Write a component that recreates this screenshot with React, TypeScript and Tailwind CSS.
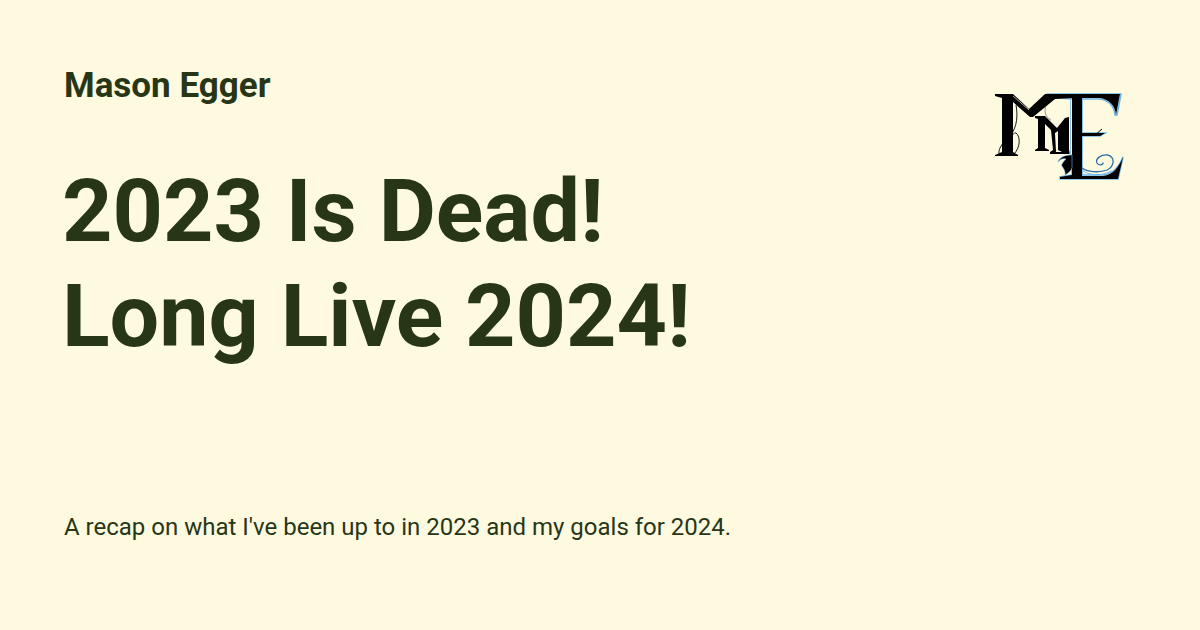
function Logo() {
  return (
    <svg width="130" height="90" viewBox="0 0 130 90" fill="none" className="block">
      {/* pale blue edge round the E */}
      <path
        stroke="#6fb4e8"
        strokeWidth="1.6"
        d="M52 2 L126 2 L122 23 L120 23 C119 13 114 8 104 7 L87 7 L87 41 L110 41 L105 44 L87 44 L87 83 L108 83 C118 82 125 74 128 65 L123 87 L65 87 L65 85 L77 83 L77 7 L52 5 Z"
      />
      {/* big M */}
      <path
        fill="#000"
        d="M0 2 L18 2 L34 17 L50 2 L78 2 L78 6 L60 7 L38 25 L35 25 L18 10 L18 60 L23 63 L23 64 L0 64 L0 63 L7 60 L7 6 L0 4 Z"
      />
      <path stroke="#fefae0" strokeWidth="0.7" d="M18 4 L34 18" />
      {/* small m */}
      <path
        fill="#000"
        d="M40 24 L50 24 L62 36 L70 26 L74 25 L74 58 L76 62 L55 62 L55 60 L58 58 L56 38 L50 32 L50 56 L54 58 L54 59 L40 59 L40 58 L43 56 L43 27 L40 26 Z"
      />
      <path fill="#fefae0" d="M60 41 L63 39 L63 58 L67 60 L61 60 Z" />
      <path fill="#fefae0" d="M74.5 8 L77 8 L77 62 L74.5 62 Z" />
      <path stroke="#6fb4e8" strokeWidth="0.8" d="M75.5 8 L75.5 62" />
      {/* E */}
      <path
        fill="#000"
        d="M68 2 L125 2 L121 23 C120 13 114 7 104 6 L87 6 L87 41 L110 41 L105 44 L87 44 L87 84 L108 84 C118 83 124 75 128 65 L123 87 L65 87 L65 85 L77 83 L77 6 L68 5 Z"
      />
      <path stroke="#000" strokeWidth="1" d="M100 43 L107 37" />
      {/* flourishes */}
      <g stroke="#000" strokeWidth="0.9">
        <path d="M21 13 C23 24 22 34 16 43 C9 49 3 56 4 62 C7 66 11 56 13 50 C16 44 19 40 21 41 C26 45 25 56 19 62" />
      </g>
      <path d="M51 14 C49 19 50 25 56 28" stroke="#777" strokeWidth="0.8" />
      <g strokeLinecap="round">
        <path d="M87 76 C92 80 104 81 112 78 C120 74 120 65 113 63 C106 62 100 67 102 71 C104 74 108 73 108 71" stroke="#2f6fa3" strokeWidth="1.3" />
        <path d="M88 79 C96 84 108 84 116 79" stroke="#6fb4e8" strokeWidth="0.9" />
      </g>
      {/* curl left of the E's stem */}
      <path
        fill="#000"
        stroke="#6fb4e8"
        strokeWidth="0.6"
        d="M77 63 C72 63 65 64 63 70 C65 67 68 66 71 67 C68 70 66 73 67 74 C68 76 71 79 70 83 C73 81 76 79 77 76 Z"
      />
    </svg>
  );
}

export default function App() {
  return (
    <div className="w-[1200px] h-[630px] bg-[#fefae0] text-[#283618] flex justify-between pl-16 pr-[75px] font-['Roboto',sans-serif] overflow-hidden">
      <div className="flex flex-col">
        <div className="mt-[65px] text-[35px] leading-[42px] font-bold">Mason Egger</div>
        <h1 className="mt-[51px] -ml-[2px] text-[88px] leading-[105px] font-bold">
          2023 Is Dead!
          <br />
          Long Live 2024!
        </h1>
        <p className="mt-[143px] text-[24px] leading-[32px]">
          A recap on what I've been up to in 2023 and my goals for 2024.
        </p>
      </div>
      <div className="pt-[92px]">
        <Logo />
      </div>
    </div>
  );
}
